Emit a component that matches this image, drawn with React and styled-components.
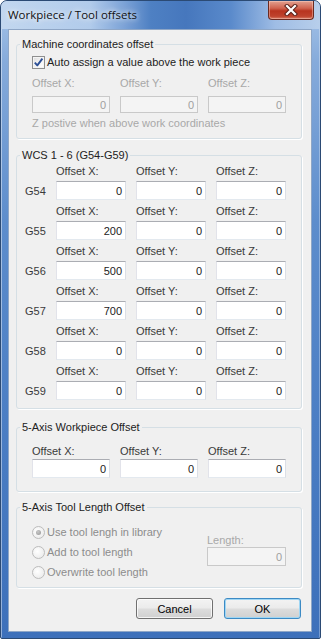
import React from 'react';
import styled, { createGlobalStyle } from 'styled-components';

const GlobalStyle = createGlobalStyle`
	html, body {
		margin: 0;
		padding: 0;
		background: #ffffff;
	}
	body {
		font-family: "Liberation Sans", Arial, sans-serif;
		font-size: 11px;
		color: #000;
	}
`;

const axes = ['X', 'Y', 'Z'];
const wcs = [
	{ name: 'G54', values: [0, 0, 0] },
	{ name: 'G55', values: [200, 0, 0] },
	{ name: 'G56', values: [500, 0, 0] },
	{ name: 'G57', values: [700, 0, 0] },
	{ name: 'G58', values: [0, 0, 0] },
	{ name: 'G59', values: [0, 0, 0] },
];
const radios = ['Use tool lengh in library', 'Add to tool length', 'Overwrite tool length'];

const CheckMark = () => (
	<svg width="11" height="11" viewBox="0 0 11 11">
		<path d="M1.8 5.6 L4.3 8.4 L9.4 1.6" fill="none" stroke="#2c4f96" strokeWidth="1.9" strokeLinejoin="round" />
	</svg>
);

const CloseGlyph = () => (
	<svg width="16" height="12" viewBox="0 0 16 12">
		<path d="M4 2 L12 10 M12 2 L4 10" stroke="#5b2119" strokeWidth="4.2" strokeLinecap="square" />
		<path d="M4 2 L12 10 M12 2 L4 10" stroke="#ffffff" strokeWidth="2.2" strokeLinecap="square" />
	</svg>
);

const App = () => (
	<>
		<GlobalStyle />
		<Window>
			<TitleBar>
				<Title>Workpiece / Tool offsets</Title>
				<CloseButton>
					<CloseGlyph />
				</CloseButton>
			</TitleBar>
			<Client>
				<Group>
					<Legend>Machine coordinates offset</Legend>
					<Body $pad="5px 15px 8px">
						<CheckRow>
							<CheckBox>
								<CheckMark />
							</CheckBox>
							<span>Auto assign a value above the work piece</span>
						</CheckRow>
						<FieldGrid $mt={8}>
							{axes.map(a => (
								<Field key={a} $gap={6}>
									<FieldLabel $disabled>Offset {a}:</FieldLabel>
									<TextBox $disabled $h={17}>0</TextBox>
								</Field>
							))}
						</FieldGrid>
						<Note>Z postive when above work coordinates</Note>
					</Body>
				</Group>

				<Group $mt={10}>
					<Legend>WCS 1 - 6 (G54-G59)</Legend>
					<WcsList>
						{wcs.map(row => (
							<WcsRow key={row.name}>
								<span />
								{axes.map(a => (
									<FieldLabel key={a}>Offset {a}:</FieldLabel>
								))}
								<RowName>{row.name}</RowName>
								{row.values.map((v, i) => (
									<TextBox key={i} $h={19}>{v}</TextBox>
								))}
							</WcsRow>
						))}
					</WcsList>
				</Group>

				<Group $mt={12}>
					<Legend>5-Axis Workpiece Offset</Legend>
					<Body $pad="11px 15px 13px">
						<FieldGrid>
							{axes.map(a => (
								<Field key={a} $gap={1}>
									<FieldLabel>Offset {a}:</FieldLabel>
									<TextBox $h={19}>0</TextBox>
								</Field>
							))}
						</FieldGrid>
					</Body>
				</Group>

				<Group $mt={9}>
					<Legend>5-Axis Tool Length Offset</Legend>
					<SplitBody>
						<RadioList>
							{radios.map((r, i) => (
								<RadioRow key={r}>
									<Radio $checked={i === 0} />
									<span>{r}</span>
								</RadioRow>
							))}
						</RadioList>
						<LengthCol>
							<FieldLabel $disabled>Length:</FieldLabel>
							<TextBox $disabled $h={19}>0</TextBox>
						</LengthCol>
					</SplitBody>
				</Group>

				<ButtonRow>
					<Button>Cancel</Button>
					<Button $default>OK</Button>
				</ButtonRow>
			</Client>
		</Window>
	</>
);

const Window = styled.div`
	width: 321px;
	height: 639px;
	box-sizing: border-box;
	border: 1px solid #2b4a74;
	border-radius: 7px 7px 2px 2px;
	background: linear-gradient(180deg, #a9c6e9 0px, #86abdb 60px, #5d8dcc 220px, #4b7ec4 420px, #3d70ba 100%);
	box-shadow: inset 1px 1px 0 rgba(255, 255, 255, 0.45), inset -1px 0 0 rgba(255, 255, 255, 0.3);
	display: flex;
	flex-direction: column;
	overflow: hidden;
`;

const TitleBar = styled.div`
	height: 28px;
	flex: none;
	display: flex;
	justify-content: space-between;
	align-items: flex-start;
	padding-left: 7px;
	background: linear-gradient(90deg, #c2d7ef 0%, #b1cbeb 28%, #7fa5d8 38%, #4e80c3 47%, #4677bd 58%, #5a8acb 72%, #9fbde5 86%, #b8cfeb 100%);
	border-radius: 6px 6px 0 0;
`;

const Title = styled.span`
	font-family: "Open Sans", "Noto Sans", sans-serif;
	font-size: 11.5px;
	line-height: 16px;
	padding-top: 6px;
	color: #111;
	text-shadow: 0 0 5px rgba(255, 255, 255, 0.9), 0 0 9px rgba(255, 255, 255, 0.7);
`;

const CloseButton = styled.div`
	width: 46px;
	height: 19px;
	margin-right: 6px;
	box-sizing: border-box;
	border: 1px solid #6b2a20;
	border-top: none;
	border-radius: 0 0 4px 4px;
	background: linear-gradient(180deg, #e3a190 0%, #d0634f 40%, #b8341f 55%, #bf432d 85%, #d98069 100%);
	box-shadow: inset 0 0 0 1px rgba(255, 220, 210, 0.4);
	display: flex;
	align-items: center;
	justify-content: center;
`;

const Client = styled.div`
	margin: 0 8px 0 7px;
	height: 603px;
	box-sizing: border-box;
	border: 1px solid #8ea6c6;
	background: #f0f0f0;
	padding: 8px 9px 0 7px;
	display: flex;
	flex-direction: column;
`;

const Group = styled.fieldset`
	margin: ${p => p.$mt || 0}px 0 0;
	padding: 0;
	min-width: 0;
	border: 1px solid #d5dfe5;
	border-radius: 3px;
	box-shadow: 1px 1px 0 #ffffff;
`;

const Legend = styled.legend`
	margin-left: 3px;
	padding: 0 2px;
	line-height: 13px;
	font-weight: normal;
	color: #222;
`;

const Body = styled.div`
	padding: ${p => p.$pad};
	display: flex;
	flex-direction: column;
`;

const CheckRow = styled.label`
	display: flex;
	align-items: center;
	gap: 2px;
	height: 13px;
	line-height: 13px;
	color: #222;
`;

const CheckBox = styled.span`
	width: 13px;
	height: 13px;
	box-sizing: border-box;
	border: 1px solid #8e8f8f;
	background: linear-gradient(135deg, #dcdcdc 0%, #f6f6f6 60%, #ffffff 100%);
	box-shadow: inset 0 0 0 1px #f4f4f4;
	display: flex;
	align-items: center;
	justify-content: center;
	flex: none;
`;

const FieldGrid = styled.div`
	margin-top: ${p => p.$mt || 0}px;
	display: grid;
	grid-template-columns: repeat(3, 78px);
	column-gap: 10px;
`;

const Field = styled.div`
	display: flex;
	flex-direction: column;
	gap: ${p => p.$gap}px;
`;

const FieldLabel = styled.span`
	line-height: 13px;
	color: ${p => (p.$disabled ? '#a8a8a8' : '#3a3a3a')};
	white-space: nowrap;
`;

const TextBox = styled.div`
	height: ${p => p.$h}px;
	box-sizing: border-box;
	border: 1px solid;
	border-color: ${p => (p.$disabled ? '#c9c9c9' : '#abadb3 #dbdfe6 #e3e9ef #e2e3ea')};
	background: ${p => (p.$disabled ? '#f4f4f4' : '#ffffff')};
	color: ${p => (p.$disabled ? '#a0a0a0' : '#222')};
	padding-right: 3px;
	display: flex;
	align-items: center;
	justify-content: flex-end;
`;

const Note = styled.span`
	margin-top: 4px;
	line-height: 13px;
	color: #a8a8a8;
`;

const WcsList = styled.div`
	padding: 3px 0 8px 8px;
	display: flex;
	flex-direction: column;
	gap: 5px;
`;

const WcsRow = styled.div`
	display: grid;
	grid-template-columns: 21px repeat(3, 70px);
	grid-template-rows: 13px 19px;
	column-gap: 10px;
	row-gap: 3px;
`;

const RowName = styled.span`
	align-self: center;
	color: #3a3a3a;
`;

const SplitBody = styled.div`
	padding: 8px 15px 5px;
	display: flex;
	justify-content: space-between;
	align-items: flex-start;
`;

const RadioList = styled.div`
	display: flex;
	flex-direction: column;
`;

const RadioRow = styled.div`
	height: 20px;
	display: flex;
	align-items: center;
	gap: 2px;
	color: #8c8c8c;
`;

const Radio = styled.span`
	width: 13px;
	height: 13px;
	box-sizing: border-box;
	border-radius: 50%;
	border: 1px solid #bcbcbc;
	background: radial-gradient(circle at 40% 40%, #ffffff 0%, #eeeeee 70%, #e2e2e2 100%);
	display: flex;
	align-items: center;
	justify-content: center;
	flex: none;

	&::after {
		content: '';
		width: 5px;
		height: 5px;
		border-radius: 50%;
		background: radial-gradient(circle at 40% 35%, #c8c8c8 0%, #959595 100%);
		display: ${p => (p.$checked ? 'block' : 'none')};
	}
`;

const LengthCol = styled.div`
	width: 79px;
	margin-top: 12px;
	display: flex;
	flex-direction: column;
`;

const ButtonRow = styled.div`
	margin-top: 10px;
	padding-right: 1px;
	display: flex;
	justify-content: flex-end;
	gap: 11px;
`;

const Button = styled.button`
	width: 77px;
	height: 21px;
	box-sizing: border-box;
	padding: 0;
	font-family: inherit;
	font-size: 11px;
	color: #000;
	border: 1px solid ${p => (p.$default ? '#3c8ac4' : '#707070')};
	border-radius: 3px;
	background: linear-gradient(180deg, #f3f3f3 0%, #ebebeb 48%, #dddddd 52%, #d0d0d0 100%);
	box-shadow: inset 0 0 0 1px ${p => (p.$default ? '#9fd6f4' : 'rgba(255, 255, 255, 0.75)')};
`;

export default App;
